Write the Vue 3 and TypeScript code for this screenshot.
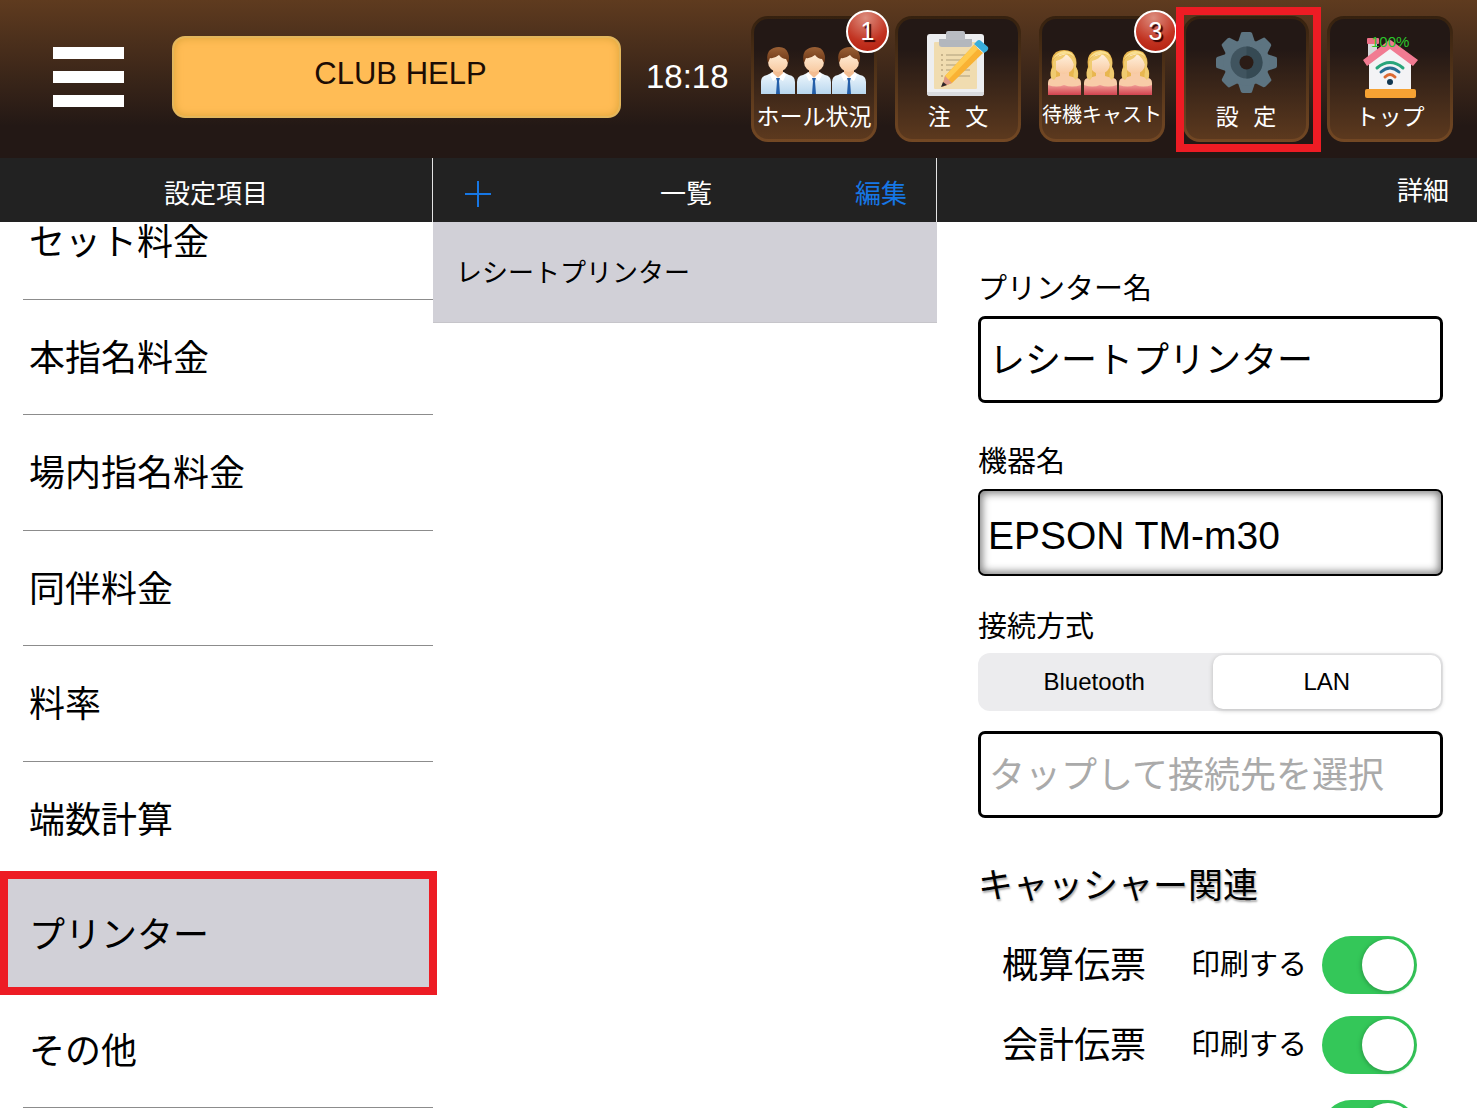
<script setup lang="ts">
import { ref } from 'vue'

interface Tile {
  id: 'hall' | 'order' | 'cast' | 'settings' | 'top'
  label: string
  small?: boolean
  badge?: number
}

interface Slip {
  id: string
  name: string
  on: boolean
}

const tiles: Tile[] = [
  { id: 'hall', label: 'ホール状況', badge: 1 },
  { id: 'order', label: '注 文' },
  { id: 'cast', label: '待機キャスト', small: true, badge: 3 },
  { id: 'settings', label: '設 定' },
  { id: 'top', label: 'トップ' },
]

const categories = ['セット料金', '本指名料金', '場内指名料金', '同伴料金', '料率', '端数計算', 'プリンター', 'その他']
const selected = ref('プリンター')

const printerName = ref('レシートプリンター')
const deviceName = ref('EPSON TM-m30')
const connection = ref('LAN')
const target = ref('')
const slips = ref<Slip[]>([
  { id: 'estimate', name: '概算伝票', on: true },
  { id: 'bill', name: '会計伝票', on: true },
])
const more = ref(true)
const teeth = [0, 45, 90, 135, 180, 225, 270, 315]
</script>

<template>
  <div class="app">
    <header class="header">
      <button class="menu" type="button" aria-label="メニュー"><i></i><i></i><i></i></button>
      <button class="club" type="button">CLUB HELP</button>
      <time class="clock">18:18</time>
      <nav class="tiles">
        <button v-for="t in tiles" :key="t.id" class="tile" type="button">
          <svg class="art" viewBox="3 3 120 79" aria-hidden="true">
            <defs>
              <linearGradient id="shirt" x1="0" y1="0" x2="0" y2="1">
                <stop offset="0" stop-color="#f2f9fe" /><stop offset="1" stop-color="#b9d7ee" />
              </linearGradient>
              <linearGradient id="brownhair" x1="0" y1="0" x2="0" y2="1">
                <stop offset="0" stop-color="#9a6035" /><stop offset="1" stop-color="#6d3716" />
              </linearGradient>
              <linearGradient id="dress" x1="0" y1="0" x2="0" y2="1">
                <stop offset="0" stop-color="#ef9a94" /><stop offset="1" stop-color="#d2434f" />
              </linearGradient>
              <linearGradient id="skin" x1="0" y1="0" x2="0" y2="1">
                <stop offset="0" stop-color="#fff0dc" /><stop offset="1" stop-color="#f8c9a0" />
              </linearGradient>
            </defs>
            <template v-if="t.id === 'hall'">
              <g v-for="x in [10, 46, 81]" :key="x" :transform="`translate(${x} 31)`">
                <path d="M0 47V35Q0 29 6 28L12 25H22L28 28Q34 29 34 35V47Z" fill="url(#shirt)" />
                <path d="M12 21H22V27L17 31L12 27Z" fill="#f3bd92" />
                <path d="M11 25L17 31L12 34L9 28ZM23 25L17 31L22 34L25 28Z" fill="#fff" />
                <path d="M15 31H19L18 34L19 47H15L16 34Z" fill="#255fa9" />
                <ellipse cx="17" cy="15" rx="10" ry="10" fill="url(#skin)" />
                <path d="M7 16Q5 9 8 4Q12 0 18 0Q25 0 27 6Q29 11 27 16L25 12Q21 12 18 8Q13 12 9 11Z" fill="url(#brownhair)" />
              </g>
            </template>
            <template v-else-if="t.id === 'order'">
              <rect x="32" y="18" width="57" height="62" rx="3" fill="#edeef0" />
              <path d="M32 76V77Q32 80 35 80H86Q89 80 89 77V76Z" fill="#dadbde" />
              <rect x="39" y="26" width="43" height="47" rx="1" fill="#f0dcb0" />
              <path d="M44 23H77V28Q77 31 74 31H47Q44 31 44 28Z" fill="#b3b7bd" />
              <path d="M51 24V17Q51 15 53 15H68Q70 15 70 17V24Z" fill="#b9bcc3" />
              <path d="M51 39H75M51 44H72M51 49H67M51 54H62M64 54H75M58 60H75" stroke="#cfbd95" stroke-width="2" />
              <path d="M46 39H48M46 44H48M46 49H48M46 54H48M46 60H48" stroke="#c8b48b" stroke-width="2" />
              <path d="M79 29L88 37L57 67L47 71L50 60Z" fill="#f9b233" />
              <path d="M79 29L83 33L53 64L50 60Z" fill="#ffcb50" />
              <path d="M50 60L57 67L47 71Z" fill="#dd9a88" />
              <path d="M48 66L52 69L46 71Z" fill="#2c2528" />
              <path d="M79 28L82 25Q84 23 86 25L93 31Q94 33 92 35L89 37Z" fill="#39aedb" />
            </template>
            <template v-else-if="t.id === 'cast'">
              <g v-for="x in [9, 45, 80]" :key="x" :transform="`translate(${x} 34)`">
                <path d="M8 2Q16 -2 24 2Q30 8 28 17Q32 23 29 30H4Q1 24 4 17Q2 7 8 2Z" fill="#e8b64f" />
                <path d="M0 37V33Q0 28 5 28L12 26V21H21V26L28 28Q33 28 33 33V37Z" fill="#f8cca8" />
                <path d="M0 35Q9 38 16 35Q24 38 33 35V45H0Z" fill="url(#dress)" />
                <ellipse cx="16" cy="14" rx="10" ry="10" fill="url(#skin)" />
                <path d="M6 19Q3 11 8 7L18 4Q16 9 8 11L8 22Q9 27 6 30Q2 28 3 24Q2 21 5 17ZM18 4Q25 4 28 11L28 17Q32 24 28 30Q24 27 26 22V15Q24 8 18 4Z" fill="#f0cb70" />
                <path d="M5 9Q9 1 17 1Q24 1 27 8Q22 3 17 4Q10 4 5 9Z" fill="#fae090" />
              </g>
            </template>
            <template v-else-if="t.id === 'settings'">
              <path v-for="a in teeth" :key="a" d="M55 26L58 17Q58 16 60 16H67Q68 16 69 17L72 26Z" fill="#5d7481" :transform="`rotate(${a} 63.5 46.5)`" />
              <circle cx="63.5" cy="46.5" r="23" fill="#5d7481" />
              <circle cx="63.5" cy="46.5" r="16" fill="#40545f" />
              <path d="M63.5 30.5A16 16 0 0 1 63.5 62.5Z" fill="#364a54" />
              <circle cx="63.5" cy="46.5" r="7" fill="#2b1c16" />
            </template>
            <template v-else>
              <rect x="41" y="24" width="9" height="20" fill="#d7d8db" />
              <rect x="40" y="22" width="12" height="6" rx="1" fill="#ee6f87" />
              <path d="M42 48L63 30L84 48V74H42Z" fill="#f3f3f5" />
              <path d="M36 44L61 25Q63 23 65 25L91 44L86 50L63 33L40 50Z" fill="#f17b92" />
              <rect x="38" y="73" width="51" height="9" rx="2" fill="#f6a233" />
              <g fill="none" stroke-linecap="round" stroke-width="3">
                <path d="M50 52Q63 41 76 52" stroke="#28a57b" />
                <path d="M54 56Q63 48 72 56" stroke="#266c91" />
                <path d="M58 61Q63 56 68 61" stroke="#dc6a32" />
              </g>
              <circle cx="63" cy="66" r="3" fill="#12364f" />
            </template>
          </svg>
          <span class="tile-label" :class="{ small: t.small }">{{ t.label }}</span>
          <span v-if="t.id === 'top'" class="signal">100%</span>
          <span v-if="t.badge" class="badge">{{ t.badge }}</span>
          <span v-if="t.id === 'settings'" class="frame tile-frame"></span>
        </button>
      </nav>
    </header>

    <main class="columns">
      <section class="column categories">
        <div class="bar center"><h2>設定項目</h2></div>
        <div class="scroller">
          <ul class="category-list">
            <li v-for="c in categories" :key="c" :class="{ active: c === selected }">
              <button type="button" @click="selected = c">{{ c }}</button>
              <span v-if="c === selected" class="frame row-frame"></span>
            </li>
          </ul>
        </div>
      </section>

      <section class="column items">
        <div class="bar tools">
          <button class="add" type="button" aria-label="追加">
            <svg width="26" height="26" viewBox="0 0 26 26"><path d="M13 0V26M0 13H26" stroke="currentColor" stroke-width="2" /></svg>
          </button>
          <h2>一覧</h2>
          <button class="edit" type="button">編集</button>
        </div>
        <button class="item" type="button">レシートプリンター</button>
      </section>

      <section class="column">
        <div class="bar end"><h2>詳細</h2></div>
        <form class="form" @submit.prevent>
          <label for="printer">プリンター名</label>
          <input id="printer" v-model="printerName" class="field" type="text" />

          <label for="device">機器名</label>
          <input id="device" v-model="deviceName" class="field inset" type="text" />

          <fieldset class="connection">
            <legend>接続方式</legend>
            <div class="segments">
              <label v-for="c in ['Bluetooth', 'LAN']" :key="c" class="segment">
                <input v-model="connection" type="radio" name="connection" :value="c" />
                <span>{{ c }}</span>
              </label>
            </div>
          </fieldset>
          <input v-model="target" class="field" type="text" placeholder="タップして接続先を選択" aria-label="接続先" />

          <h3>キャッシャー関連</h3>
          <div class="slips">
            <div v-for="s in slips" :key="s.id" class="slip">
              <span class="slip-name">{{ s.name }}</span>
              <label class="slip-label" :for="s.id">印刷する</label>
              <input :id="s.id" v-model="s.on" class="switch" type="checkbox" role="switch" />
            </div>
            <div class="slip next">
              <input v-model="more" class="switch" type="checkbox" role="switch" aria-label="印刷する" />
            </div>
          </div>
        </form>
      </section>
    </main>
  </div>
</template>

<style>
body {
  margin: 0;
  background: #fff;
}
</style>

<style scoped>
.app,
.app * {
  box-sizing: border-box;
}

.app {
  display: flex;
  flex-direction: column;
  height: 100vh;
  overflow: hidden;
  color: #000;
  font-family: 'Liberation Sans', 'Noto Sans CJK JP', sans-serif;
}

button,
input {
  margin: 0;
  padding: 0;
  border: 0;
  background: none;
  color: inherit;
  font: inherit;
}

h2,
h3 {
  margin: 0;
  font-weight: 400;
}

.header {
  display: flex;
  align-items: flex-start;
  flex: none;
  height: 158px;
  padding: 16px 24px 0 53px;
  background: linear-gradient(#5f3b1f, #231815 80%);
}

.menu {
  display: flex;
  flex-direction: column;
  flex: none;
  gap: 12px;
  width: 71px;
  margin-top: 31px;
}

.menu i {
  height: 12px;
  background: #fff;
}

.club {
  flex: 1;
  height: 82px;
  margin: 20px 24px 0 48px;
  padding: 0 0 6px 8px;
  border: 2px solid #e2b65c;
  border-radius: 13px;
  background: #ffbc55;
  box-shadow: inset 0 0 8px #dba43a;
  color: #1c0c04;
  font-size: 31px;
}

.clock {
  flex: none;
  width: 106px;
  margin-top: 41px;
  padding-left: 1px;
  color: #fff;
  font-size: 33px;
  line-height: 40px;
}

.tiles {
  display: flex;
  flex: none;
  gap: 18px;
}

.tile {
  position: relative;
  display: flex;
  flex-direction: column;
  align-items: center;
  width: 126px;
  height: 126px;
  border: 3px solid transparent;
  border-radius: 17px;
  background:
    linear-gradient(#231815 25%, #5c391e) padding-box,
    linear-gradient(#35210f, #734824) border-box;
  color: #fff;
}

.art {
  display: block;
  flex: none;
  width: 120px;
  height: 79px;
}

.tile-label {
  font-size: 23px;
  line-height: 38px;
  white-space: pre-wrap;
  word-spacing: 8px;
}

.tile-label.small {
  font-size: 20px;
  line-height: 34px;
  white-space: nowrap;
}

.signal {
  position: absolute;
  top: 14px;
  left: 41px;
  color: #2cc52c;
  font-size: 15px;
  line-height: 18px;
}

.badge {
  position: absolute;
  top: -9px;
  right: -15px;
  width: 43px;
  height: 43px;
  border: 2px solid #fff;
  border-radius: 50%;
  background: radial-gradient(circle at 45% 15%, #dc8d7e, #c23321 60%, #b01a0a);
  font-size: 25px;
  line-height: 39px;
  text-align: center;
  text-shadow: 2px 2px 1px #300;
}

.frame {
  position: absolute;
  z-index: 2;
  border: 8px solid #ed1c24;
  pointer-events: none;
}

.tile-frame {
  inset: -12px -15px -13px -10px;
}

.columns {
  display: grid;
  grid-template-columns: minmax(0, 433fr) minmax(0, 504fr) minmax(0, 540fr);
  flex: 1;
  min-height: 0;
}

.column {
  display: flex;
  flex-direction: column;
  min-width: 0;
  min-height: 0;
}

.categories {
  position: relative;
  z-index: 1;
}

.bar {
  display: flex;
  align-items: center;
  flex: none;
  height: 64px;
  padding-top: 8px;
  border-right: 1px solid #e4e4e4;
  background: #222;
  color: #fff;
  font-size: 26px;
  line-height: 38px;
}

.bar h2 {
  font-size: 26px;
}

.center {
  justify-content: center;
}

.end {
  justify-content: flex-end;
  padding: 2px 28px 0 0;
  border-right: 0;
}

.tools {
  display: grid;
  grid-template-columns: 1fr auto 1fr;
  padding-left: 32px;
  padding-right: 29px;
}

.add {
  display: flex;
  justify-self: start;
  color: #1677e5;
}

.edit {
  justify-self: end;
  color: #1677e5;
}

.scroller {
  display: flex;
  flex-direction: column;
  flex: 1;
  min-height: 0;
  overflow-y: clip;
}

.category-list {
  display: flex;
  flex-direction: column;
  flex: 1;
  margin: -38px 0 0;
  padding: 0;
  list-style: none;
}

.category-list li {
  position: relative;
  flex: 1;
  min-height: 96px;
  padding-left: 23px;
}

.category-list button {
  display: block;
  width: 100%;
  height: 100%;
  padding: 0 0 4px 6px;
  border-bottom: 1px solid #8c8c8c;
  font-size: 36px;
  text-align: left;
}

.category-list .active {
  background: #d1d0d7;
}

.row-frame {
  inset: -6px -4px -2px 0;
}

.item {
  height: 101px;
  padding: 0 0 4px 23px;
  border-bottom: 1px solid #c6c5ca;
  background: #d1d0d7;
  font-size: 26px;
  text-align: left;
}

.form {
  display: flex;
  flex-direction: column;
  min-height: 0;
  padding: 50px 34px 0 41px;
  overflow: hidden;
}

.form > label,
legend {
  flex: none;
  padding: 0;
  font-size: 29px;
  line-height: 34px;
}

.field {
  flex: none;
  width: 100%;
  height: 87px;
  padding: 2px 8px 0;
  border: 3px solid #000;
  border-radius: 7px;
  background: #fff;
  font-size: 36px;
}

.field::placeholder {
  color: #aaa;
  opacity: 1;
}

.form > label + .field {
  margin: 10px 0 42px;
  padding: 0 8px 6px;
}

.form > label + .inset {
  margin-bottom: 34px;
  padding: 6px 8px 0;
  border-width: 2px;
  box-shadow: inset 0 0 8px 2px #777;
  font-size: 39px;
}

.connection {
  flex: none;
  min-width: 0;
  margin: 0 0 20px;
  padding: 0;
  border: 0;
}

.segments {
  display: flex;
  height: 58px;
  margin-top: 9px;
  padding: 2px;
  border-radius: 12px;
  background: #ececee;
}

.segment {
  position: relative;
  flex: 1;
}

.segment + .segment {
  margin-left: 4px;
}

.segment input {
  position: absolute;
  opacity: 0;
}

.segment span {
  display: flex;
  align-items: center;
  justify-content: center;
  height: 100%;
  border-radius: 10px;
  font-size: 24px;
}

.segment input:checked + span {
  background: #fff;
  box-shadow: 0 1px 5px #bbb;
}

h3 {
  flex: none;
  margin-top: 48px;
  font-size: 35px;
  line-height: 40px;
  text-shadow: 1px 2px 2px #aaa;
}

.slips {
  display: flex;
  flex-direction: column;
  gap: 22px;
  margin-top: 30px;
  padding: 0 26px 0 24px;
}

.slip {
  display: flex;
  align-items: center;
  flex: none;
  height: 58px;
}

.next {
  margin-top: 4px;
}

.slip-name,
.slip-label {
  padding-bottom: 6px;
}

.slip-name {
  font-size: 36px;
}

.slip-label {
  margin-left: auto;
  margin-right: 15px;
  font-size: 29px;
}

.switch {
  flex: none;
  width: 95px;
  height: 58px;
  margin-left: auto;
  padding: 3px;
  border-radius: 29px;
  background: #c8c8cc;
  appearance: none;
}

.slip-label + .switch {
  margin-left: 0;
}

.switch::before {
  display: block;
  width: 52px;
  height: 52px;
  border-radius: 50%;
  background: #fff;
  box-shadow: -1px 1px 4px #2a9a46;
  content: '';
}

.switch:checked {
  background: #34c759;
}

.switch:checked::before {
  margin-left: auto;
}
</style>
